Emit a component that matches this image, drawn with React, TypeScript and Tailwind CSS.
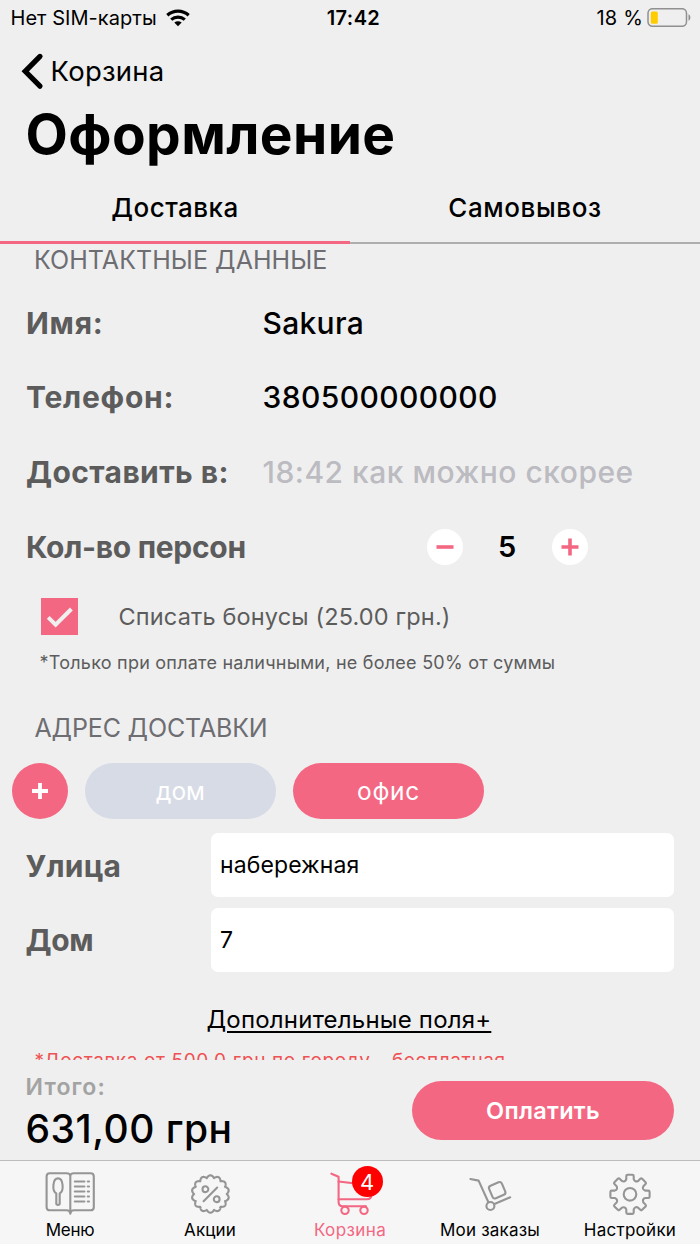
import type { ReactNode } from 'react';

const polar = (r: number, deg: number): [number, number] => {
  const a = (deg * Math.PI) / 180;
  return [r * Math.sin(a), -r * Math.cos(a)];
};

const pt = ([x, y]: [number, number]) => `${x.toFixed(2)} ${y.toFixed(2)}`;

// Scalloped outline with 14 round lobes
const sealPath =
  Array.from({ length: 280 }, (_, i) => {
    const deg = (i * 360) / 280;
    const r = 16.3 + 2.4 * Math.abs(Math.cos((7 * deg * Math.PI) / 180));
    return `${i ? 'L' : 'M'}${pt(polar(r, deg))}`;
  }).join('') + 'Z';

// Eight-toothed cog with softened corners
const rotate = (x: number, y: number, deg: number) => {
  const a = (deg * Math.PI) / 180;
  return `${(x * Math.cos(a) - y * Math.sin(a)).toFixed(2)} ${(x * Math.sin(a) + y * Math.cos(a)).toFixed(2)}`;
};
const gearPath =
  Array.from({ length: 8 }, (_, k) => {
    const r = (x: number, y: number) => rotate(x, y, k * 45);
    return `${k ? 'L' : 'M'}${r(-3.7, -15.2)}L${r(-3.7, -18.3)}Q${r(-3.7, -19.6)} ${r(-2.4, -19.6)}L${r(2.4, -19.6)}Q${r(3.7, -19.6)} ${r(3.7, -18.3)}L${r(3.7, -15.2)}Q${r(4.1, -13.6)} ${r(5.4, -13.1)}Q${r(6.6, -12.7)} ${rotate(-3.7, -15.2, k * 45 + 45)}`;
  }).join('') + 'Z';

function WifiIcon() {
  return (
    <svg width="24" height="18" viewBox="0 0 24 18" fill="none" stroke="#000" strokeWidth="3.2">
      <path d="M1.3 6.2C7.4.7 16.6.7 22.7 6.2" />
      <path d="M5.2 10.6C9 7.2 15 7.2 18.8 10.6" />
      <path d="M12 17.2 8.3 13.4C10.4 11.7 13.6 11.7 15.7 13.4Z" fill="#000" stroke="none" />
    </svg>
  );
}

function BatteryIcon() {
  return (
    <svg width="44" height="20" viewBox="0 0 44 20" fill="none">
      <rect x="1" y="0.7" width="38.5" height="17.6" rx="4.5" stroke="#909090" strokeWidth="1.5" />
      <rect x="3.8" y="3.5" width="7" height="12.2" rx="1.5" fill="#ffcc00" />
      <path d="M41.5 6.2C44 7.4 44 11.5 41.5 12.7Z" fill="#909090" />
    </svg>
  );
}

function MenuIcon() {
  return (
    <>
      <path d="M.3 6.5Q.3 3.2-3.4 3.2H-20.2Q-23.4 3.2-23.4 6.4V37.2Q-23.4 40.3-20.2 40.3H-3.4Q0 40.3.3 43.6Q.6 40.3 4 40.3H20.6Q23.8 40.3 23.8 37.2V6.4Q23.8 3.2 20.6 3.2H3.8Q.3 3.2.3 6.5V43.6" />
      <path d="M-13.7 34V23.4C-18.4 20.5-17.2 8.4-12 8.4C-6.8 8.4-5.6 20.5-10.3 23.4V34Q-12 35.8-13.7 34Z" />
      <path d="M4.8 11.5H14.4M4.8 16.5H14.4M4.8 21.5H14.4M4.8 26.5H14.4M4.8 31.5H14.4M17.8 11.5H19M17.8 16.5H19M17.8 21.5H19M17.8 26.5H19M17.8 31.5H19" />
    </>
  );
}

function SaleIcon() {
  return (
    <g transform="translate(.4 24)">
      <path d={sealPath} />
      <circle cx="-5" cy="-4.8" r="2.9" />
      <circle cx="6.3" cy="5.2" r="2.9" />
      <path d="M6.8-6.4-6.8 7.2" />
    </g>
  );
}

function CartIcon() {
  return (
    <>
      <path d="M-18.6 3.7-11.4 6.7V32Q-11.4 36.2-7.4 36.2H16" />
      <path d="M-11.4 11.5 21.5 15.4V24.5Q21.5 29.3 16.5 29.3H-11.4" />
      <circle cx="-5" cy="40.3" r="3.7" />
      <circle cx="14" cy="40.3" r="3.7" />
    </>
  );
}

function OrdersIcon() {
  return (
    <>
      <path d="M-19.6 9-11.4 10.6-1.6 32.2" />
      <circle cx="0.4" cy="36" r="4" />
      <path d="M5 33.8 20.2 27.3" />
      <rect x="-6.8" y="-6.8" width="13.8" height="13.6" rx="2.6" transform="translate(7.1 20.3) rotate(-23)" />
    </>
  );
}

function SettingsIcon() {
  return (
    <g transform="translate(0 24.3)">
      <path d={gearPath} />
      <circle r="6.3" />
    </g>
  );
}

function TabItem({ label, tracking, active, badge, children }: { label: string; tracking: string; active?: boolean; badge?: string; children: ReactNode }) {
  return (
    <button className={`flex w-[140px] flex-col items-center pt-[9px] ${active ? 'text-[#f46782]' : 'text-black'}`}>
      <span className="relative block h-12 w-[60px]">
        <svg width="60" height="48" viewBox="-30 0 60 48" fill="none" stroke={active ? '#f46782' : '#959595'} strokeWidth="2.1" strokeLinecap="round" strokeLinejoin="round">
          {children}
        </svg>
        {badge && (
          <span className="absolute top-[-4px] left-[31.7px] flex size-[31px] items-center justify-center rounded-full bg-[#ff0000] text-[22px] leading-none text-white">
            {badge}
          </span>
        )}
      </span>
      <span className={`block h-6 text-[17px] leading-6 whitespace-nowrap ${tracking}`}>{label}</span>
    </button>
  );
}

function Row({ label, tracking, children }: { label: string; tracking: string; children: ReactNode }) {
  return (
    <div className="flex h-[74.6px] shrink-0 items-center pl-[26px]">
      <div className={`w-[236.5px] shrink-0 text-[30px] font-bold whitespace-nowrap text-[#5c5c5c] ${tracking}`}>{label}</div>
      {children}
    </div>
  );
}

function Field({ label, value, tracking }: { label: string; value: string; tracking: string }) {
  return (
    <div className="flex h-[74.6px] items-center pl-[25.5px]">
      <div className={`w-[185.5px] pt-[2px] text-[30px] font-bold text-[#5c5c5c] ${tracking}`}>{label}</div>
      <div className="flex h-16 w-[463px] items-center rounded-[7px] bg-white pl-[9px] text-[23px] tracking-[0.1px]">{value}</div>
    </div>
  );
}

export default function App() {
  return (
    <div className="flex h-[1244px] w-[700px] flex-col overflow-hidden bg-[#efefef] font-['Inter','Liberation_Sans',sans-serif] text-black">
      <header className="shrink-0">
        <div className="grid h-9 grid-cols-[1fr_auto_1fr] items-center pb-px text-[20px]">
          <div className="flex items-center gap-[9px] pl-[10.5px]">
            <span className="tracking-[0.05px]">Нет SIM-карты</span>
            <WifiIcon />
          </div>
          <div className="pl-[7px] font-semibold tracking-[0.4px]">17:42</div>
          <div className="flex items-center justify-end gap-1 pr-[9px]">
            <span className="tracking-[0.2px]">18 %</span>
            <BatteryIcon />
          </div>
        </div>
        <div className="flex h-[70px] items-center pt-px pl-5">
          <svg className="mb-px" width="26" height="40" viewBox="0 0 26 40" fill="none" stroke="#000" strokeWidth="5.2" strokeLinecap="round">
            <path d="M20 5.4 5.2 20.3 20 35.2" />
          </svg>
          <span className="pl-[4.5px] text-[27.5px] tracking-[0.25px]">Корзина</span>
        </div>
        <h1 className="flex h-14 items-center pl-[25.5px] text-[55px] font-bold tracking-[0.4px]">Оформление</h1>
        <div className="flex h-[82px] text-[26px] font-medium">
          <div className="flex w-1/2 items-center justify-center border-b-[3px] border-[#f46782] pt-[18px] pb-[6px] tracking-[0.5px]">Доставка</div>
          <div className="flex w-1/2 items-center justify-center border-b-2 border-[#b0adae] pt-[18px] pb-[7px] tracking-[0.6px]">Самовывоз</div>
        </div>
      </header>

      <main className="flex h-[816px] shrink-0 flex-col overflow-hidden">
        <h2 className="h-[42px] shrink-0 pl-[34px] text-[25px] leading-[32px] tracking-[0.05px] text-[#6d6d72]">КОНТАКТНЫЕ ДАННЫЕ</h2>
        <Row label="Имя:" tracking="tracking-[0.7px]">
          <span className="text-[30px] font-medium tracking-[0.3px]">Sakura</span>
        </Row>
        <Row label="Телефон:" tracking="tracking-[0.75px]">
          <span className="text-[30px] font-medium tracking-[0.4px]">380500000000</span>
        </Row>
        <Row label="Доставить в:" tracking="tracking-[0.4px]">
          <span className="text-[30px] font-medium tracking-[0.5px] text-[#bbbbc1]">18:42 как можно скорее</span>
        </Row>
        <Row label="Кол-во персон" tracking="tracking-[-0.3px]">
          <div className="flex items-center pb-px pl-[164.5px]">
            <button className="flex size-9 items-center justify-center rounded-full bg-white">
              <svg width="18" height="18" viewBox="0 0 18 18" stroke="#f46782" strokeWidth="3.6">
                <path d="M.5 9H17.5" />
              </svg>
            </button>
            <span className="w-[89px] pr-px text-center text-[29px] font-semibold">5</span>
            <button className="flex size-9 items-center justify-center rounded-full bg-white">
              <svg width="18" height="18" viewBox="0 0 18 18" stroke="#f46782" strokeWidth="3.6">
                <path d="M.5 9H17.5M9 .5V17.5" />
              </svg>
            </button>
          </div>
        </Row>

        <div className="mt-[13.8px] flex h-[37px] shrink-0 items-center pl-[41px]">
          <div className="flex size-[37px] items-center justify-center bg-[#f46782]">
            <svg width="28" height="24" viewBox="0 0 28 24" fill="none" stroke="#efefef" strokeWidth="4">
              <path d="M2.2 12.4 9.6 19.6 25.4 4" />
            </svg>
          </div>
          <span className="pl-[40.5px] text-[23.5px] tracking-[0.15px] text-[#5c5c5c]">Списать бонусы (25.00 грн.)</span>
        </div>
        <p className="mt-[16.3px] h-6 shrink-0 pl-[39.5px] text-[18px] leading-6 tracking-[0.24px] text-[#5c5c5c]">
          *Только при оплате наличными, не более 50% от суммы
        </p>

        <h2 className="mt-[37.5px] h-[30px] shrink-0 pl-[34.5px] text-[25px] leading-[30px] tracking-[-0.15px] text-[#6d6d72]">АДРЕС ДОСТАВКИ</h2>
        <div className="mt-[20.3px] flex h-14 shrink-0 items-center gap-[17px] pl-3 text-[24.5px] text-white">
          <button className="flex size-14 items-center justify-center rounded-full bg-[#f46782]">
            <svg width="16" height="16" viewBox="0 0 16 16" stroke="#fff" strokeWidth="3.8">
              <path d="M0 8H16M8 0V16" />
            </svg>
          </button>
          <button className="h-14 w-[191px] rounded-full bg-[#d7dbe6] pt-px">дом</button>
          <button className="h-14 w-[191px] rounded-full bg-[#f46782] pt-px tracking-[0.7px]">офис</button>
        </div>
        <div className="mt-[8.6px] shrink-0">
          <Field label="Улица" value="набережная" tracking="tracking-[0.2px]" />
          <Field label="Дом" value="7" tracking="tracking-[-0.4px]" />
        </div>
        <div className="mt-[27.5px] h-[30px] shrink-0 pl-[206.5px] text-[24px] leading-[30px] tracking-[0.2px]">
          <span className="underline decoration-[1.5px] underline-offset-[2.5px]">Дополнительные поля+</span>
        </div>
        <p className="mt-[14.5px] h-6 shrink-0 pl-[34.5px] text-[19px] leading-6 tracking-[0.63px] whitespace-nowrap text-[#ee5253]">
          *Доставка от 500.0 грн по городу - бесплатная
        </p>
      </main>

      <section className="flex h-[100px] shrink-0 justify-between pr-[26px] pl-[25.5px]">
        <div className="pt-3">
          <div className="h-[30px] text-[23px] leading-[30px] font-semibold tracking-[1.1px] text-[#a3a3a3]">Итого:</div>
          <div className="h-[54px] text-[39px] leading-[54px] font-medium tracking-[0.5px]">631,00 грн</div>
        </div>
        <button className="mt-[21px] h-[59px] w-[262px] rounded-full bg-[#f46782] text-[23.5px] font-semibold tracking-[0.3px] text-white">Оплатить</button>
      </section>

      <nav className="flex h-[84px] shrink-0 border-t border-[#bdbdbd] bg-[#f6f6f6]">
        <TabItem label="Меню" tracking="tracking-[-0.3px]">
          <MenuIcon />
        </TabItem>
        <TabItem label="Акции" tracking="tracking-[0.15px]">
          <SaleIcon />
        </TabItem>
        <TabItem label="Корзина" tracking="tracking-[0.4px]" active badge="4">
          <CartIcon />
        </TabItem>
        <TabItem label="Мои заказы" tracking="tracking-[0.2px]">
          <OrdersIcon />
        </TabItem>
        <TabItem label="Настройки" tracking="tracking-[0.26px]">
          <SettingsIcon />
        </TabItem>
      </nav>
    </div>
  );
}
